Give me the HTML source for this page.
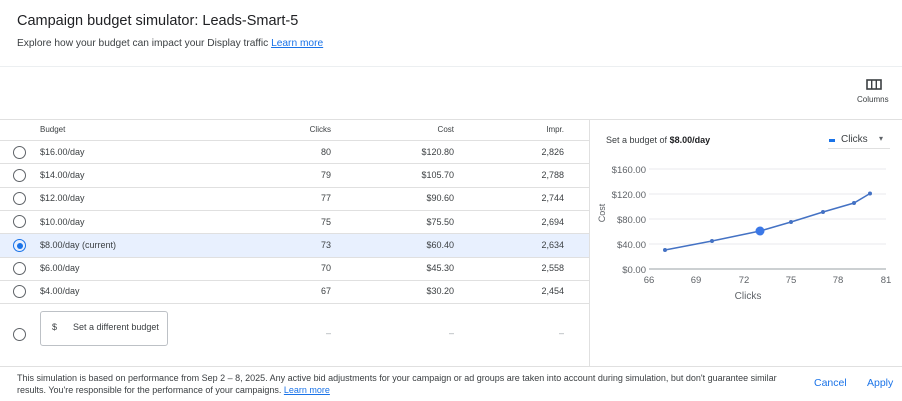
<!DOCTYPE html>
<html><head><style>
body{margin:0;width:902px;height:401px;background:#fff;font-family:"Liberation Sans",Arial,sans-serif;color:#3c4043;position:relative;overflow:hidden}
.a{position:absolute;white-space:nowrap}
.t{font-size:9px;color:#3c4043}
.line{position:absolute;height:1px;background:#e0e0e0}
.radio{position:absolute;left:13px;width:11px;height:11px;border:1.5px solid #5f6368;border-radius:50%}
.r{text-align:right}
</style></head><body>
<div class="a" style="left:17px;top:13px;font-size:14.5px;color:#202124">Campaign budget simulator: Leads-Smart-5</div>
<div class="a" style="left:17px;top:38px;font-size:10.2px;color:#3c4043">Explore how your budget can impact your Display traffic <span style="color:#1a73e8;text-decoration:underline">Learn more</span></div>
<div class="line" style="left:0;top:66px;width:902px;background:#eceff1"></div>
<svg class="a" style="left:866px;top:79px" width="17" height="11"><rect x="1" y="1" width="14" height="9" fill="none" stroke="#3c4043" stroke-width="1.6"/><line x1="5.7" y1="1" x2="5.7" y2="10" stroke="#3c4043" stroke-width="1.4"/><line x1="10.3" y1="1" x2="10.3" y2="10" stroke="#3c4043" stroke-width="1.4"/></svg>
<div class="a" style="left:857px;top:95px;font-size:8px;color:#3c4043">Columns</div>
<div class="line" style="left:0;top:119px;width:902px"></div>
<div class="a" style="left:589px;top:119px;width:1px;height:247px;background:#e0e0e0"></div>
<div class="a t" style="left:40px;top:125px;font-size:8px">Budget</div>
<div class="a t r" style="left:280px;width:51px;top:125px;font-size:8px">Clicks</div>
<div class="a t r" style="left:400px;width:54px;top:125px;font-size:8px">Cost</div>
<div class="a t r" style="left:500px;width:64px;top:125px;font-size:8px">Impr.</div>
<div class="line" style="left:0;top:140px;width:589px"></div>
<div class="a" style="left:0;top:234px;width:589px;height:23px;background:#e8f0fe"></div>

<div class="radio" style="top:146px"></div><div class="a t" style="left:40px;top:147px">$16.00/day</div><div class="a t r" style="left:280px;width:51px;top:147px">80</div><div class="a t r" style="left:400px;width:54px;top:147px">$120.80</div><div class="a t r" style="left:500px;width:64px;top:147px">2,826</div>
<div class="line" style="left:0;top:163px;width:589px"></div>
<div class="radio" style="top:169px"></div><div class="a t" style="left:40px;top:170px">$14.00/day</div><div class="a t r" style="left:280px;width:51px;top:170px">79</div><div class="a t r" style="left:400px;width:54px;top:170px">$105.70</div><div class="a t r" style="left:500px;width:64px;top:170px">2,788</div>
<div class="line" style="left:0;top:187px;width:589px"></div>
<div class="radio" style="top:192px"></div><div class="a t" style="left:40px;top:193px">$12.00/day</div><div class="a t r" style="left:280px;width:51px;top:193px">77</div><div class="a t r" style="left:400px;width:54px;top:193px">$90.60</div><div class="a t r" style="left:500px;width:64px;top:193px">2,744</div>
<div class="line" style="left:0;top:210px;width:589px"></div>
<div class="radio" style="top:215px"></div><div class="a t" style="left:40px;top:217px">$10.00/day</div><div class="a t r" style="left:280px;width:51px;top:217px">75</div><div class="a t r" style="left:400px;width:54px;top:217px">$75.50</div><div class="a t r" style="left:500px;width:64px;top:217px">2,694</div>
<div class="line" style="left:0;top:233px;width:589px"></div>
<div class="radio" style="top:239px;border-color:#1a73e8"><div style="position:absolute;left:2.5px;top:2.5px;width:6px;height:6px;border-radius:50%;background:#1a73e8"></div></div><div class="a t" style="left:40px;top:240px">$8.00/day (current)</div><div class="a t r" style="left:280px;width:51px;top:240px">73</div><div class="a t r" style="left:400px;width:54px;top:240px">$60.40</div><div class="a t r" style="left:500px;width:64px;top:240px">2,634</div>
<div class="line" style="left:0;top:257px;width:589px"></div>
<div class="radio" style="top:262px"></div><div class="a t" style="left:40px;top:263px">$6.00/day</div><div class="a t r" style="left:280px;width:51px;top:263px">70</div><div class="a t r" style="left:400px;width:54px;top:263px">$45.30</div><div class="a t r" style="left:500px;width:64px;top:263px">2,558</div>
<div class="line" style="left:0;top:280px;width:589px"></div>
<div class="radio" style="top:285px"></div><div class="a t" style="left:40px;top:286px">$4.00/day</div><div class="a t r" style="left:280px;width:51px;top:286px">67</div><div class="a t r" style="left:400px;width:54px;top:286px">$30.20</div><div class="a t r" style="left:500px;width:64px;top:286px">2,454</div>
<div class="line" style="left:0;top:303px;width:589px"></div>
<div class="radio" style="top:328px"></div>
<div class="a" style="left:40px;top:311px;width:126px;height:33px;border:1px solid #bdc1c6;border-radius:3px"></div>
<div class="a t" style="left:52px;top:322px">$</div>
<div class="a t" style="left:73px;top:322px">Set a different budget</div>
<div class="a t r" style="left:280px;width:51px;top:328px;color:#9aa0a6">–</div>
<div class="a t r" style="left:400px;width:54px;top:328px;color:#9aa0a6">–</div>
<div class="a t r" style="left:500px;width:64px;top:328px;color:#9aa0a6">–</div>

<div class="a" style="left:606px;top:135px;font-size:9px;color:#3c4043">Set a budget of <b style="color:#202124">$8.00/day</b></div>
<div class="a" style="left:829px;top:139px;width:6px;height:2.5px;background:#1a73e8"></div>
<div class="a" style="left:841px;top:134px;font-size:10px;color:#3c4043">Clicks</div>
<div class="a" style="left:879px;top:134px;font-size:8px;color:#5f6368">▾</div>
<div class="line" style="left:828px;top:148px;width:62px"></div>

<svg class="a" style="left:0;top:0" width="902" height="401">
<g stroke="#e8eaed" stroke-width="1"><line x1="649" y1="169" x2="886" y2="169"/><line x1="649" y1="194" x2="886" y2="194"/><line x1="649" y1="219" x2="886" y2="219"/><line x1="649" y1="244" x2="886" y2="244"/></g>
<line x1="649" y1="269" x2="886" y2="269" stroke="#9aa0a6"/>
<g font-family="Liberation Sans,Arial,sans-serif" font-size="9.5" fill="#5f6368" text-anchor="end">
<text x="646" y="173">$160.00</text><text x="646" y="198">$120.00</text><text x="646" y="223">$80.00</text><text x="646" y="248">$40.00</text><text x="646" y="273">$0.00</text></g>
<g font-family="Liberation Sans,Arial,sans-serif" font-size="9.5" fill="#5f6368" text-anchor="middle">
<text x="649" y="283">66</text><text x="696" y="283">69</text><text x="744" y="283">72</text><text x="791" y="283">75</text><text x="838" y="283">78</text><text x="886" y="283">81</text>
<text x="748" y="299" font-size="10">Clicks</text>
<text transform="translate(605,213) rotate(-90)" font-size="9">Cost</text></g>
<polyline fill="none" stroke="#4472c4" stroke-width="1.5" points="665,250 712,241 760,231 791,222 823,212 854,203 870,193.5"/>
<g fill="#4472c4"><circle cx="665" cy="250" r="2"/><circle cx="712" cy="241" r="2"/><circle cx="760" cy="231" r="4.5" fill="#3b78e7"/><circle cx="791" cy="222" r="2"/><circle cx="823" cy="212" r="2"/><circle cx="854" cy="203" r="2"/><circle cx="870" cy="193.5" r="2"/></g>
</svg>

<div class="line" style="left:0;top:366px;width:902px"></div>
<div class="a" style="left:17px;top:372px;font-size:9px;line-height:12px;color:#3c4043">This simulation is based on performance from Sep 2 – 8, 2025. Any active bid adjustments for your campaign or ad groups are taken into account during simulation, but don't guarantee similar<br>results. You're responsible for the performance of your campaigns. <span style="color:#1a73e8;text-decoration:underline">Learn more</span></div>
<div class="a" style="left:814px;top:377px;font-size:10.5px;color:#1a73e8">Cancel</div>
<div class="a" style="left:867px;top:377px;font-size:10.5px;color:#1a73e8">Apply</div>
</body></html>
